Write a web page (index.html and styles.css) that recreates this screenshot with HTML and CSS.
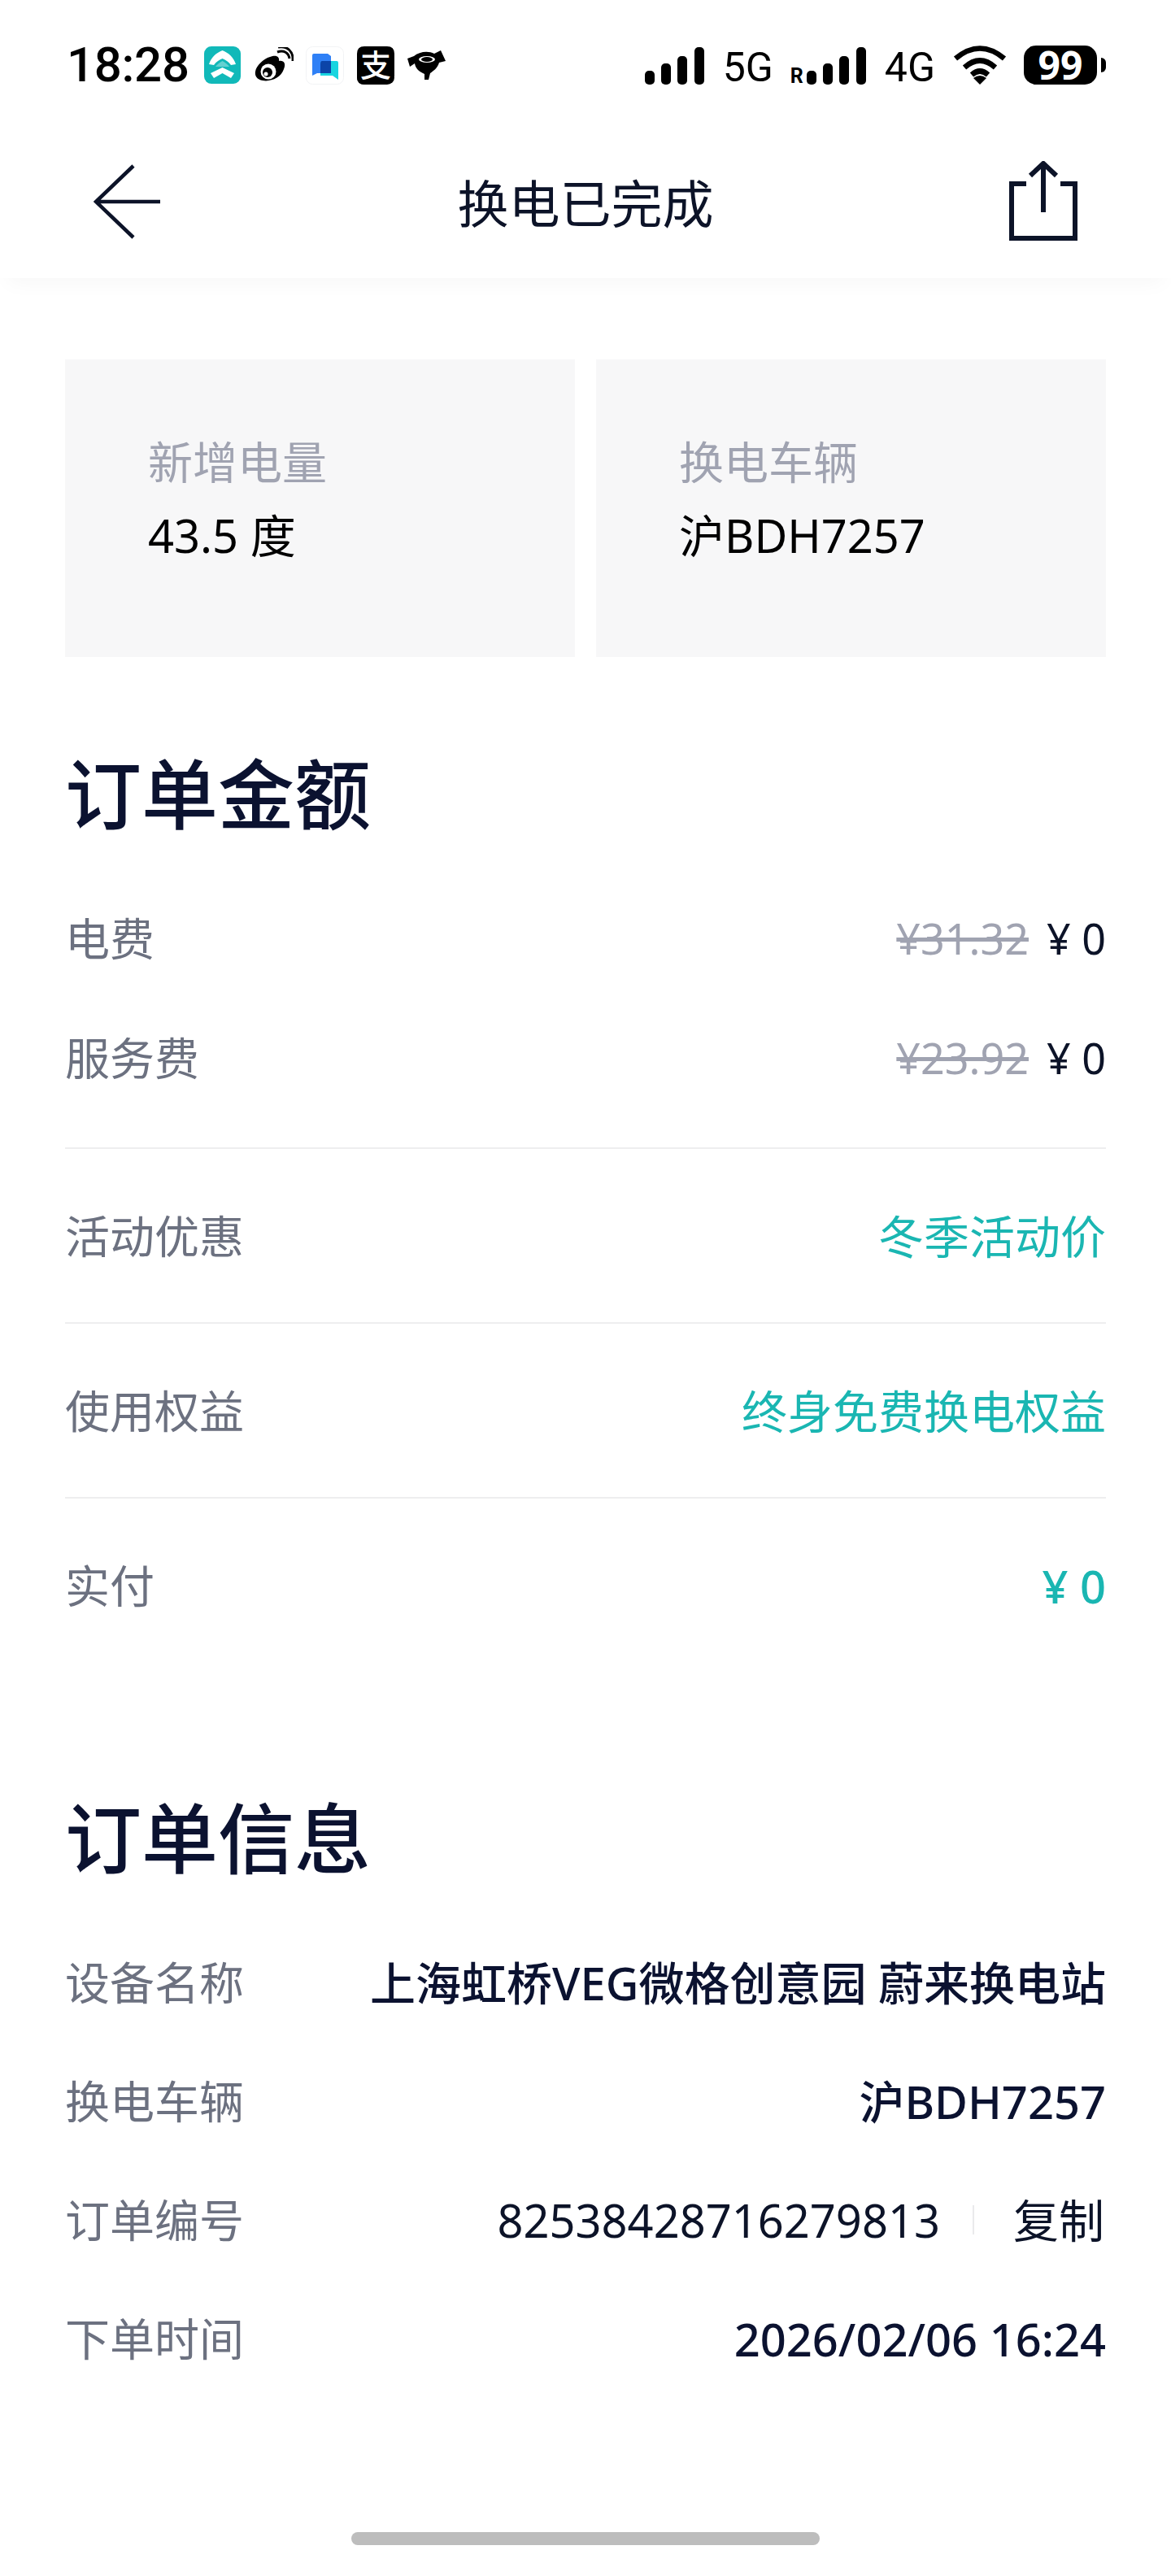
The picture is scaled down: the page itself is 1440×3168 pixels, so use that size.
FILE: index.html
```html
<!DOCTYPE html>
<html lang="zh-CN">
<head>
<meta charset="utf-8">
<title>换电已完成</title>
<link rel="stylesheet" href="styles.css">
</head>
<body>
<div class="page">
  <header class="status">
    <div class="status-left">
      <span class="time">18:28</span>
      <svg class="ico nio" viewBox="0 0 45 46"><rect width="45" height="46" rx="9" fill="#11b9b9"/><path d="M6 22 C9 13 15 8 22.500 5 C30 8 36 13 39 22 L33 23 C30 19 27 17 22.500 15 C18 17 15 19 12 23 Z" fill="#fff"/><path d="M22.500 18 C26 20 29 22 31 25 L14 25 C16 22 19 20 22.500 18 Z" fill="#fff" opacity=".35"/><path d="M8 33 L22.500 26 L37 33 L33 39 L22.500 33 L12 39 Z" fill="#fff"/></svg>
      <svg class="ico weibo" viewBox="0 0 48 44"><path d="M19 12 C27 9 31 12 30 17 C36 16 39 20 36 27 C33 37 20 43 10 41 C3 40 0 35 1 30 C2 23 11 14 19 12 Z" fill="#000"/><circle cx="17" cy="30" r="9.500" fill="#fff"/><circle cx="16" cy="31" r="6" fill="#000"/><circle cx="14" cy="33" r="2.500" fill="#fff"/><path d="M28 6 C36 3 42 7 43 14 M29 0 C40 -2 48 5 47 17" fill="none" stroke="#000" stroke-width="3"/></svg>
      <svg class="ico chat" viewBox="0 0 47 47"><rect x=".5" y=".5" width="46" height="46" rx="8" fill="#fff" stroke="#f2f3f5"/><path d="M8 11 Q8 9 10 9 H27 L31 12 V33 H14 L8 36 Z" fill="#2f80f6"/><path d="M22 18 H38 Q40 18 40 20 V41 L33 36 H18 V22 Q18 18 22 18 Z" fill="#19d5e0"/><path d="M20 18 H31 V33 H18 V22 Q18 18 20 18 Z" fill="#0c44a8"/></svg>
      <svg class="ico alipay" viewBox="0 0 46 47"><path d="M9 0 H37 Q46 0 46 9 V37 Q42 40 34 38 L9 47 Q0 47 0 38 V9 Q0 0 9 0 Z" fill="#000"/><rect y="30" width="46" height="17" rx="9" fill="#000"/><text class="alipay-text" x="23" y="37" text-anchor="middle">支</text></svg>
      <svg class="ico jd" viewBox="0 0 47 36"><path d="M0 10 L8 7 C14 2 25 0 33 4 L41 0 L47 13 L39 15 C37 22 31 26 28 28 L26 36 H21 L21 29 C14 26 10 22 9 16 L3 20 Z" fill="#000"/><ellipse cx="24" cy="11" rx="10" ry="4" fill="#fff"/><ellipse cx="24" cy="11" rx="7" ry="3" fill="#000"/></svg>
    </div>
    <div class="status-right">
      <svg class="ico signal" viewBox="0 0 73 46"><rect y="29" width="12" height="17" rx="5"/><rect x="20" y="20" width="12" height="26" rx="5"/><rect x="40" y="11" width="12" height="35" rx="5"/><rect x="61" width="12" height="46" rx="5"/></svg>
      <span class="net net-5g">5G</span>
      <span class="roam">R</span>
      <svg class="ico signal signal-two" viewBox="0 0 73 46"><rect y="29" width="12" height="17" rx="5"/><rect x="20" y="20" width="12" height="26" rx="5"/><rect x="40" y="11" width="12" height="35" rx="5"/><rect x="61" width="12" height="46" rx="5"/></svg>
      <span class="net net-4g">4G</span>
      <svg class="ico wifi" viewBox="0 0 66 48"><path d="M3 16 Q33 -9 63 16 M14 27 Q33 10 52 27 M23 36 Q33 27 43 36" fill="none" stroke="#000" stroke-width="6.500"/><path d="M33 48 L25 40 Q33 34 41 40 Z" fill="#000"/></svg>
      <span class="battery"><span class="battery-level">99</span></span>
      <span class="battery-nub"></span>
    </div>
  </header>

  <nav class="nav">
    <svg class="nav-ico back" viewBox="0 0 84 92"><path d="M49 2 L3 46 L49 90 M4 46 H82" fill="none" stroke="#0c1328" stroke-width="4.500"/></svg>
    <h1 class="nav-title">换电已完成</h1>
    <svg class="nav-ico share" viewBox="0 0 84 98"><path d="M21 28 H3 V95 H81 V28 H63" fill="none" stroke="#0c1328" stroke-width="6"/><path d="M42 63 V4 M26 18 L42 3 L58 18" fill="none" stroke="#0c1328" stroke-width="6"/></svg>
  </nav>

  <main class="content">
    <section class="cards">
      <div class="card">
        <div class="card-label">新增电量</div>
        <div class="card-value">43.5 度</div>
      </div>
      <div class="card">
        <div class="card-label">换电车辆</div>
        <div class="card-value">沪BDH7257</div>
      </div>
    </section>

    <section class="section">
      <h2 class="section-title">订单金额</h2>
      <div class="row"><span class="key">电费</span><span class="val"><s class="old">¥31.32</s><span class="price">¥ 0</span></span></div>
      <div class="row row-last"><span class="key">服务费</span><span class="val"><s class="old">¥23.92</s><span class="price">¥ 0</span></span></div>
      <div class="line-row"><span class="key">活动优惠</span><span class="val teal">冬季活动价</span></div>
      <div class="line-row"><span class="key">使用权益</span><span class="val teal">终身免费换电权益</span></div>
      <div class="line-row"><span class="key">实付</span><span class="val teal paid">¥ 0</span></div>
    </section>

    <section class="section section-info">
      <h2 class="section-title">订单信息</h2>
      <div class="row"><span class="key">设备名称</span><span class="val strong">上海虹桥VEG微格创意园 蔚来换电站</span></div>
      <div class="row"><span class="key">换电车辆</span><span class="val strong">沪BDH7257</span></div>
      <div class="row"><span class="key">订单编号</span><span class="val order"><span class="order-no">82538428716279813</span><i class="sep"></i><span class="copy">复制</span></span></div>
      <div class="row"><span class="key">下单时间</span><span class="val strong">2026/02/06 16:24</span></div>
    </section>
  </main>
  <footer class="home"><span class="home-bar"></span></footer>
</div>
</body>
</html>
```
FILE: styles.css
```css
* { box-sizing: border-box; }
html, body { margin: 0; background: #fff; }
body { font-family: "Noto Sans", "Noto Sans CJK SC", sans-serif; color: #0c1328; }
.page { width: 1440px; height: 3168px; display: flex; flex-direction: column; overflow: hidden; }

.status { height: 160px; padding: 56px 80px 0 82px; display: flex; justify-content: space-between; align-items: flex-start; }
.status-left, .status-right { display: flex; align-items: center; height: 48px; }
.time { font-family: Roboto, sans-serif; font-weight: 500; font-size: 60px; line-height: 48px; color: #000; width: 145px; letter-spacing: -.3px; }
.ico { display: block; flex: none; }
.nio { width: 45px; height: 46px; margin-left: 24px; }
.weibo { width: 48px; height: 44px; margin-left: 17px; }
.chat { width: 47px; height: 47px; margin-left: 15px; }
.alipay { width: 46px; height: 47px; margin-left: 16px; }
.jd { width: 47px; height: 36px; margin-left: 16px; }
.alipay-text { font-family: "Noto Sans CJK SC", sans-serif; font-size: 38px; fill: #fff; font-weight: 500; }

.signal { width: 73px; height: 46px; margin-top: 2px; }
.signal-two { margin-left: 4px; }
.net { font-family: Roboto, sans-serif; font-size: 50px; line-height: 48px; color: #000; margin-top: 6px; }
.net-5g { margin-left: 23px; }
.net-4g { margin-left: 23px; }
.roam { font-family: Roboto, sans-serif; font-size: 25px; font-weight: 700; line-height: 20px; color: #000; align-self: flex-end; margin-left: 21px; }
.wifi { width: 66px; height: 48px; margin-left: 22px; }
.battery { width: 90px; height: 48px; margin-left: 21px; border-radius: 15px; background: #000; display: flex; align-items: center; justify-content: center; }
.battery-level { font-family: "Open Sans", sans-serif; font-weight: 700; font-size: 48px; line-height: 48px; color: #fff; }
.battery-nub { width: 6px; height: 18px; margin-left: 5px; background: #000; border-radius: 0 9px 9px 0; }

.nav { height: 182px; padding: 0 115px; display: grid; grid-template-columns: 1fr auto 1fr; align-items: center; background: #fff; box-shadow: 0 16px 24px -10px rgba(10, 20, 40, .035); position: relative; }
.nav-ico { display: block; }
.back { width: 84px; height: 92px; margin-top: -6px; }
.share { width: 84px; height: 98px; justify-self: end; margin-top: -8px; }
.nav-title { margin: 0; font-weight: 400; font-size: 63px; line-height: 90px; color: #0c1328; margin-top: -2px; }

.content { flex: 1; padding: 100px 80px 0; }
.cards { display: grid; grid-template-columns: 627px 627px; gap: 26px; }
.card { height: 366px; background: #f7f7f8; padding: 94px 40px 0 102px; }
.card-label { font-size: 55px; line-height: 64px; color: #a0a3b1; }
.card-value { font-size: 56px; line-height: 80px; margin-top: 18px; color: #000; }

.section { margin-top: 96px; }
.section-info { margin-top: 132px; }
.section-title { margin: 0 0 31px; height: 146px; font-size: 94px; line-height: 146px; font-weight: 500; color: #0b1230; }
.row, .line-row { display: flex; justify-content: space-between; align-items: center; }
.row { height: 146px; }
.row-last { height: 148px; margin-bottom: 36px; }
.line-row { height: 215px; border-top: 2px solid #eeeeef; }
.key { font-size: 55px; line-height: 80px; color: #6c7180; }
.val { font-size: 56px; line-height: 80px; display: flex; align-items: center; }
.old { font-size: 52px; color: #a0a3b1; margin-right: 22px; }
.price { color: #0c1328; font-size: 52px; }
.teal { color: #1ab6b2; }
.paid { font-weight: 500; }
.strong { font-weight: 500; color: #0b1230; }
.order { color: #0c1328; }
.order-no { font-weight: 400; }
.sep { width: 2px; height: 36px; background: #eaeaec; margin: 0 48px 0 40px; }
.copy { width: 114px; }

.home { flex: none; height: 54px; display: flex; justify-content: center; }
.home-bar { width: 576px; height: 16px; border-radius: 8px; background: #bdbdbd; }
```
